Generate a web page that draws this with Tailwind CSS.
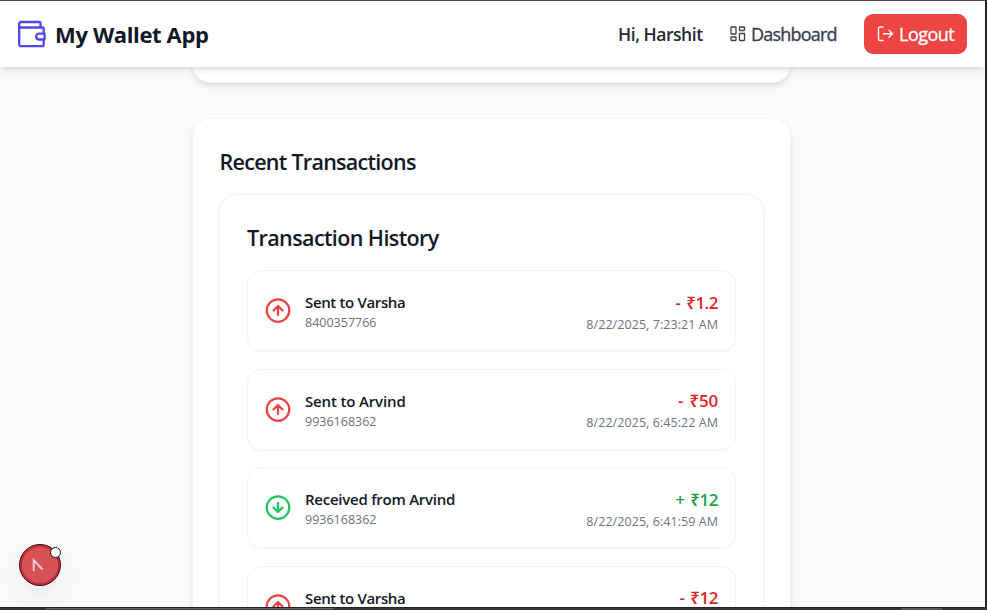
<!DOCTYPE html>
<html lang="en">
<head>
<meta charset="utf-8">
<title>My Wallet App</title>
<script src="https://cdn.jsdelivr.net/npm/@tailwindcss/browser@4"></script>
</head>
<body class="h-[610px] overflow-hidden bg-[#1f2320] font-['Open_Sans','Noto_Sans',sans-serif]">
<svg class="hidden">
  <symbol id="up" viewBox="0 0 24 24" fill="none" stroke="currentColor" stroke-width="2" stroke-linecap="round" stroke-linejoin="round"><circle cx="12" cy="12" r="10"/><path d="m16 12-4-4-4 4M12 16V8"/></symbol>
  <symbol id="down" viewBox="0 0 24 24" fill="none" stroke="currentColor" stroke-width="2" stroke-linecap="round" stroke-linejoin="round"><circle cx="12" cy="12" r="10"/><path d="M12 8v8M8 12l4 4 4-4"/></symbol>
</svg>
<div class="relative flex h-[607px] w-[985px] flex-col overflow-hidden border-t border-[#574349] bg-[#f9fafb]">
  <header class="relative z-10 flex h-[66px] shrink-0 items-center justify-between bg-white pr-[18px] pl-[18px] shadow-md">
    <div class="flex items-center gap-[9px]">
      <svg class="h-[28px] w-[28px] text-[#4f46e5]" viewBox="0 0 28 28" fill="none" stroke="currentColor" stroke-width="2.300" stroke-linejoin="round" stroke-linecap="round"><path d="M1.500 7.500h23a1.200 1.200 0 0 1 1.200 1.200v4M25.700 20.500v4.300a1.400 1.400 0 0 1-1.400 1.400H3.200a2 2 0 0 1-2-2V4a2 2 0 0 1 2-2H21.300a1.200 1.200 0 0 1 1.200 1.200v4"/><path d="M26.500 13.700h-5.500a2.900 2.900 0 0 0 0 5.800h5.500z"/></svg>
      <span class="text-[22px] leading-[32px] font-bold tracking-[-0.36px] whitespace-nowrap text-[#111827]">My Wallet App</span>
    </div>
    <nav class="flex items-center text-[18px] whitespace-nowrap">
      <span class="mr-[27px] w-[85px] text-[17.500px] font-semibold tracking-[-0.45px] text-[#1f2937]">Hi, Harshit</span>
      <a class="mr-[26px] flex w-[108px] items-center gap-[5px] tracking-[-0.8px] text-[#374151] [-webkit-text-stroke:0.35px_currentColor]">
        <svg class="h-[16px] w-[16px] shrink-0" viewBox="0 0 16 16" fill="none" stroke="currentColor" stroke-width="1.300"><rect x="1" y="1" width="5" height="7" rx=".5"/><rect x="9.500" y="1" width="5" height="3.500" rx=".5"/><rect x="1" y="11" width="5" height="3.500" rx=".5"/><rect x="9.500" y="7.500" width="5" height="7" rx=".5"/></svg>
        <span>Dashboard</span>
      </a>
      <button class="flex h-[40px] w-[103px] items-center gap-[5px] rounded-[9px] bg-[#ef4444] pl-[13px] tracking-[-0.5px] text-white [-webkit-text-stroke:0.3px_currentColor]">
        <svg class="h-[16px] w-[17px] shrink-0" viewBox="0 0 17 16" fill="none" stroke="currentColor" stroke-width="1.400" stroke-linecap="round" stroke-linejoin="round"><path d="M6 1H3a1.500 1.500 0 0 0-1.500 1.500v10.500A1.500 1.500 0 0 0 3 14.500h3M6.500 7.700h9M12 4.200l3.500 3.500-3.500 3.500"/></svg>
        <span>Logout</span>
      </button>
    </nav>
  </header>
  <main class="ml-[192px] w-[599px]">
    <section class="-mt-[24px] h-[40px] rounded-[18px] border border-[#f3f4f6] bg-white shadow-md"></section>
    <section class="mt-[35px] h-[620px] rounded-[18px] border border-[#f3f4f6] bg-white px-[26px] pt-[27px] shadow-md">
      <h2 class="ml-[0.5px] h-[32px] text-[21.500px] leading-[32px] font-semibold tracking-[-0.72px] text-[#111827]">Recent Transactions</h2>
      <div class="mt-[16px] h-[620px] rounded-[18px] border border-[#f3f4f6] bg-white px-[27px] pt-[27px] shadow-[0_1px_3px_rgba(0,0,0,0.08)]">
        <h3 class="h-[32px] text-[21.500px] leading-[32px] font-semibold tracking-[-0.6px] text-[#111827]">Transaction History</h3>
        <ul class="mt-[16px] flex flex-col gap-[17.700px]">
          <li class="flex h-[81px] shrink-0 items-center rounded-[14px] border border-[#f3f4f6] px-[17px] shadow-xs">
            <svg class="mr-[13px] h-[27px] w-[27px] -translate-x-[0.5px] text-[#ef4444]"><use href="#up"/></svg>
            <div class="mt-[3px]"><p class="text-[15px] leading-[20px] font-semibold text-[#111827] tracking-[-0.35px]">Sent to Varsha</p><p class="text-[12.500px] leading-[21px] text-[#6b7280]">8400357766</p></div>
            <div class="mt-[5px] ml-auto text-right"><p class="text-[17px] leading-[22px] font-semibold tracking-[-0.5px] text-[#dc2626] [word-spacing:2px]">- ₹1.2</p><p class="text-[12.500px] leading-[21px] tracking-[0.06px] text-[#6b7280]">8/22/2025, 7:23:21 AM</p></div>
          </li>
          <li class="flex h-[81px] shrink-0 items-center rounded-[14px] border border-[#f3f4f6] px-[17px] shadow-xs">
            <svg class="mr-[13px] h-[27px] w-[27px] -translate-x-[0.5px] text-[#ef4444]"><use href="#up"/></svg>
            <div class="mt-[5px]"><p class="text-[15px] leading-[20px] font-semibold text-[#111827] tracking-[-0.15px]">Sent to Arvind</p><p class="text-[12.500px] leading-[21px] text-[#6b7280]">9936168362</p></div>
            <div class="mt-[6px] ml-auto text-right"><p class="text-[17px] leading-[22px] font-semibold tracking-[-0.2px] text-[#dc2626] [word-spacing:2px]">- ₹50</p><p class="text-[12.500px] leading-[22px] tracking-[0.06px] text-[#6b7280]">8/22/2025, 6:45:22 AM</p></div>
          </li>
          <li class="flex h-[81px] shrink-0 items-center rounded-[14px] border border-[#f3f4f6] px-[17px] shadow-xs">
            <svg class="mr-[13px] h-[27px] w-[27px] -translate-x-[0.5px] text-[#22c55e]"><use href="#down"/></svg>
            <div class="mt-[3px]"><p class="text-[15px] leading-[20px] font-semibold text-[#111827] tracking-[-0.25px]">Received from Arvind</p><p class="text-[12.500px] leading-[21px] text-[#6b7280]">9936168362</p></div>
            <div class="mt-[7px] ml-auto text-right"><p class="text-[17px] leading-[22px] font-semibold tracking-[-0.5px] text-[#16a34a] [word-spacing:2px]">+ ₹12</p><p class="text-[12.500px] leading-[22px] tracking-[0.06px] text-[#6b7280]">8/22/2025, 6:41:59 AM</p></div>
          </li>
          <li class="flex h-[81px] shrink-0 items-start rounded-[14px] border border-[#f3f4f6] px-[17px] shadow-xs">
            <svg class="mt-[26px] mr-[13px] h-[27px] w-[27px] -translate-x-[0.5px] text-[#ef4444]"><use href="#up"/></svg>
            <p class="mt-[21px] text-[15px] leading-[20px] font-semibold text-[#111827] tracking-[-0.35px]">Sent to Varsha</p>
            <p class="mt-[20px] ml-auto text-[17px] leading-[22px] font-semibold tracking-[-0.5px] text-[#dc2626] [word-spacing:2px]">- ₹12</p>
          </li>
        </ul>
      </div>
    </section>
  </main>
  <div class="absolute top-[543px] left-[19px] h-[42px] w-[42px] rounded-full border border-[#171717] bg-[#d55155] shadow-[inset_0_0_0_2px_#d3272f,0_12px_28px_rgba(0,0,0,0.07)]">
    <svg class="absolute top-[13px] left-[11px] h-[14px] w-[14px]" viewBox="0 0 14 14" fill="none" stroke="#f3c9cc" stroke-width="2"><path d="M2.700 13V2.200L11.500 11.500"/></svg>
    <span class="absolute top-0 left-[30px] h-[11px] w-[11px] translate-y-[2px] rounded-full border border-[#171717] bg-white"></span>
  </div>
</div>
<div class="flex h-[3px] w-full border-t border-[#242424] bg-[#2c3a2c]"><div class="ml-[46px] h-[2px] w-[288px] border-t border-[#666] bg-[#343234]"></div><div class="ml-[567px] h-[2px] w-[41px] bg-[#555a50]"></div></div>
</body>
</html>
